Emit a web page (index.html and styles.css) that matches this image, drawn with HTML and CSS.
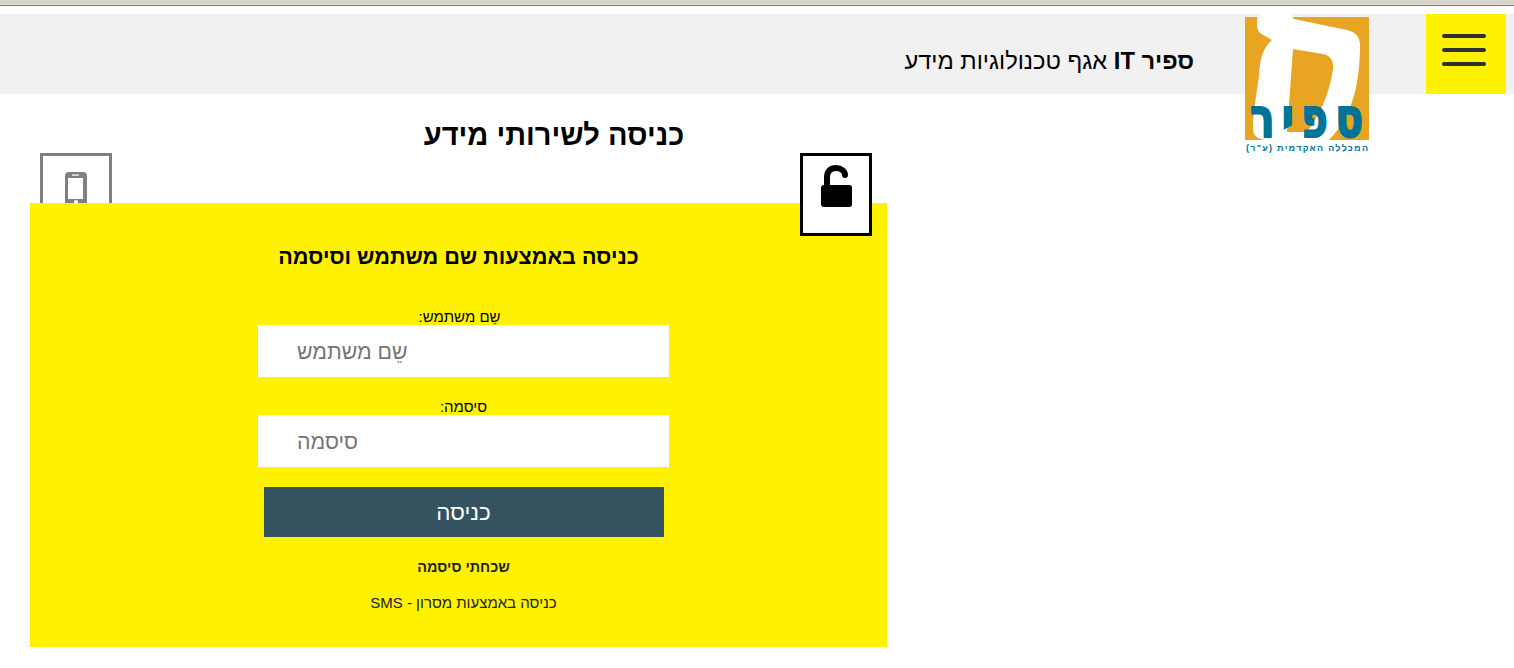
FILE: index.html
```html
<!DOCTYPE html>
<html lang="he">
<head>
<meta charset="utf-8">
<title>ספיר IT</title>
<link rel="stylesheet" href="styles.css">
</head>
<body>
<div class="chrome"></div>
<header class="header">
  <div class="brand" dir="rtl"><b>ספיר IT</b> אגף טכנולוגיות מידע</div>
  <div class="logo">
    <svg class="logo-svg" width="124" height="139" viewBox="0 -3 124 139">
      <rect x="0" y="0" width="124" height="123" fill="#e8a423"/>
      <path fill="#fff" fill-rule="evenodd" d="M12 3C12 -1 16 -3 20 -3L42 -3C46 -3 47 0 49 2L102 13C110 15 115 19 115 28C115 46 113 68 107 85C103 97 95 112 84 123L20 123C13 122 8 119 8 112C8 95 12 75 14 58C15 45 16 33 27 23L15 16C12 13 12 8 12 3ZM48 32L42 115L62 115C73 100 84 80 88 52C89 44 85 38 78 37Z"/>
      <text class="logo-name" transform="translate(118 120) scale(1 1.35)" textLength="113" lengthAdjust="spacing">ספיר</text>
      <text class="logo-sub" x="123" y="134" textLength="122" lengthAdjust="spacing">המכללה האקדמית (ע"ר)</text>
    </svg>
  </div>
  <button class="menu" aria-label="תפריט"><span></span><span></span><span></span></button>
</header>
<h1 class="page-title" dir="rtl">כניסה לשירותי מידע</h1>
<main class="main">
  <div class="tabs">
    <div class="tab tab-phone">
      <svg width="22" height="36" viewBox="0 0 22 36">
        <rect x="0" y="0" width="22" height="36" rx="4" fill="#808080"/>
        <rect x="3" y="6" width="15" height="21" fill="#fff"/>
        <rect x="7" y="2.500" width="7" height="1.200" fill="#fff"/>
        <circle cx="11" cy="30" r="2" fill="#fff"/>
      </svg>
    </div>
    <div class="tab tab-lock">
      <svg width="34" height="44" viewBox="0 0 34 44">
        <path d="M8 22V12C8 6.500 11.500 3 17 3C22.500 3 26 6.500 26 10" fill="none" stroke="#000" stroke-width="6" stroke-linecap="round"/>
        <rect x="2" y="20" width="31" height="22" rx="3" fill="#000"/>
      </svg>
    </div>
  </div>
  <section class="panel" dir="rtl">
    <h2 class="panel-title">כניסה באמצעות שם משתמש וסיסמה</h2>
    <form class="form">
      <label class="label" for="user">שֵם משתמש:</label>
      <input class="input" id="user" type="text" placeholder="שֵם משתמש">
      <label class="label label-second" for="pass">סיסמה:</label>
      <input class="input" id="pass" type="password" placeholder="סיסמה">
      <button class="submit" type="button">כניסה</button>
      <a class="link link-bold">שכחתי סיסמה</a>
      <a class="link link-sms">כניסה באמצעות מסרון - SMS</a>
    </form>
  </section>
</main>
</body>
</html>
```
FILE: styles.css
```css
* { box-sizing: border-box; }
html, body { margin: 0; padding: 0; background: #fff; overflow: hidden; }
body { font-family: "Liberation Sans", Arial, sans-serif; color: #000; }

.chrome { height: 6px; background: #d9d5ce; border-bottom: 1px solid #808080; margin-bottom: 8px; }

.header { height: 80px; background: #f1f1f1; display: flex; justify-content: flex-end; padding-right: 8px; }
.brand { font-size: 23.7px; line-height: 28px; margin-top: 33px; color: #000; }
.logo { width: 124px; height: 80px; margin-left: 51px; margin-right: 57px; }
.logo-svg { display: block; overflow: visible; }
.logo-name { font-family: "DejaVu Sans", sans-serif; font-weight: 700; font-size: 41px; fill: #007396; stroke: #007396; stroke-width: 1.500px; direction: rtl; }
.logo-sub { font-family: "Liberation Sans", sans-serif; font-weight: 700; font-size: 9px; fill: #007396; direction: rtl; }

.menu { width: 80px; height: 80px; background: #fff200; border: 0; padding: 0 4px 8px 0; display: flex; flex-direction: column; align-items: center; justify-content: center; gap: 10px; }
.menu span { display: block; width: 44px; height: 4px; border-radius: 2px; background: #2f2f36; }

.page-title { width: 1108px; height: 59px; margin: 0; font-size: 29px; line-height: 32px; padding-top: 25px; font-weight: 700; text-align: center; }

.main { width: 857px; margin-left: 30px; }
.tabs { height: 50px; display: flex; justify-content: space-between; padding: 0 15px 0 10px; }
.tab { width: 72px; height: 83px; background: #fff; display: flex; justify-content: center; flex-shrink: 0; }
.tab-phone { border: 3px solid #808080; padding-top: 16px; height: 60px; overflow: hidden; }
.tab-lock { border: 3px solid #000; padding-top: 9px; position: relative; z-index: 2; }

.panel { position: relative; z-index: 1; height: 444px; background: #fff200; padding-top: 40px; }
.panel-title { margin: 0; height: 28px; font-size: 21.600px; line-height: 28px; font-weight: 700; text-align: center; }

.form { width: 411px; margin: 37px 218px 0 0; display: flex; flex-direction: column; align-items: center; }
.label { width: 411px; height: 17px; font-size: 15px; line-height: 17px; text-align: center; padding-right: 8px; }
.label-second { margin-top: 21px; padding-right: 0; }
.input { width: 411px; height: 52px; border: 0; background: #fff; padding: 2px 39px 0; font-family: "Liberation Sans", Arial, sans-serif; font-size: 21.300px; text-align: left; direction: rtl; border-radius: 0; outline: 0; }
.input::placeholder { color: #757575; opacity: 1; }
.submit { width: 400px; height: 50px; margin-top: 20px; border: 0; padding: 2px 0 0; background: #34525f; color: #fff; font-family: "Liberation Sans", Arial, sans-serif; font-size: 22.400px; }
.link { font-size: 15px; line-height: 16px; color: #222; }
.link-bold { font-size: 14.400px; font-weight: 700; margin-top: 22px; }
.link-sms { margin-top: 20px; }
```
